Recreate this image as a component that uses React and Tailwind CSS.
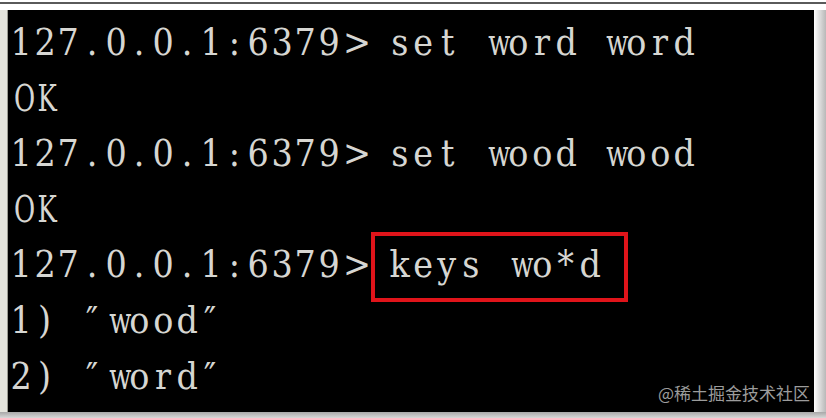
import React from 'react';

// Lines of the redis-cli session
const lines = [
  '127.0.0.1:6379> set word word',
  'OK',
  '127.0.0.1:6379> set wood wood',
  'OK',
  '127.0.0.1:6379> keys wo*d',
  '1) ″wood″',
  '2) ″word″',
];

// wide glyphs get squeezed into their cell, like the console font
const wide = 'OKwWmM';

// One console line, every char in a fixed-width cell
function ConsoleLine({ text }) {
  return (
    <div className="flex h-[55.6px] leading-[55.6px]">
      {text.split('').map((ch, i) => (
        <span key={i} className="inline-block w-[23.7px] shrink-0 text-center whitespace-pre">
          {wide.includes(ch) ? <span className="inline-block scale-x-[0.68]">{ch}</span> : <span className="inline-block scale-x-[0.88]">{ch}</span>}
        </span>
      ))}
    </div>
  );
}

export default function App() {
  return (
    <div className="w-[826px] h-[418px] bg-white flex flex-col overflow-hidden">
      {/* top rule */}
      <div className="h-[2px] bg-white" />
      <div className="h-[2px] bg-[#5a5a5a]" />
      <div className="h-[6px] bg-white" />
      <div className="flex h-[402px]">
        <div className="w-[8px] bg-[#e4e4dc] border-r border-[#9a9a90]" />
        {/* terminal window */}
        <div className="relative w-[806px] h-full bg-black pt-[5px] pl-[1px] text-[38px] text-[#d6d6d2] font-['DejaVu_Serif',serif]">
          {lines.map((l, i) => (
            <ConsoleLine key={i} text={l} />
          ))}
          {/* highlight box */}
          <div className="absolute left-[363px] top-[222px] w-[257px] h-[70px] border-4 border-[#e0141a]" />
          <div className="absolute right-[4px] bottom-[11px] text-[17px] leading-none text-[#9c9c9c] font-['Noto_Sans_CJK_SC',sans-serif]">
            @稀土掘金技术社区
          </div>
        </div>
        <div className="flex-1 bg-gradient-to-r from-white to-[#b8b8b8]" />
      </div>
      <div className="flex-1 bg-gradient-to-b from-[#a8a8a8] to-[#d8d8d8]" />
    </div>
  );
}
